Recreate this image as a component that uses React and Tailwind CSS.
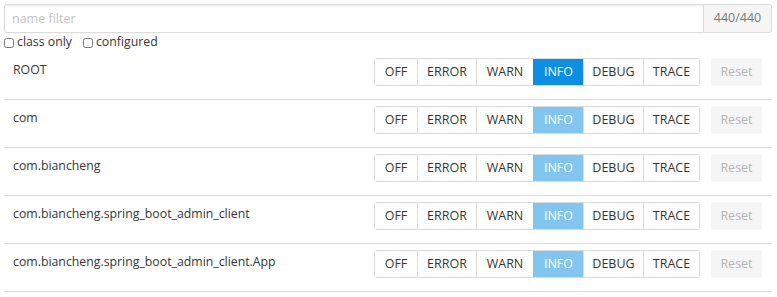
import React from 'react';

const levels = [
  { name: 'OFF', w: 'w-[42px]' },
  { name: 'ERROR', w: 'w-[59px]' },
  { name: 'WARN', w: 'w-[57px]' },
  { name: 'INFO', w: 'w-[50px]' },
  { name: 'DEBUG', w: 'w-[60px]' },
  { name: 'TRACE', w: 'w-[56px]' },
];

const loggers = [
  { name: 'ROOT', level: 'INFO', configured: true },
  { name: 'com', level: 'INFO' },
  { name: 'com.biancheng', level: 'INFO' },
  { name: 'com.biancheng.spring_boot_admin_client', level: 'INFO' },
  { name: 'com.biancheng.spring_boot_admin_client.App', level: 'INFO' },
];

const LevelButtons = ({ level, configured }) => (
  <div className="flex h-[28px] rounded-[3px] border border-[#dbdbdb]">
    {levels.map((l, i) => {
      const active = l.name === level;
      let cls = 'bg-white text-[#363636]';
      if (active) cls = configured ? 'bg-[#0b8ee3] text-white' : 'bg-[#82c5f1] text-white';
      return (
        <button
          key={l.name}
          className={`${l.w} ${cls} ${i > 0 ? 'border-l border-[#dbdbdb]' : ''} ${active ? 'border-l-transparent' : ''} flex items-center justify-center text-[12.5px] leading-none`}
        >
          {l.name}
        </button>
      );
    })}
  </div>
);

export default function App() {
  return (
    <div className="w-[777px] h-[297px] bg-white pl-[4px] pr-[5px] pt-[4px] text-[#363636]" style={{ fontFamily: '"Segoe UI", "Open Sans", sans-serif' }}>
      <div className="flex h-[29px]">
        <input
          placeholder="name filter"
          className="flex-1 h-full border border-[#dbdbdb] rounded-l-[3px] px-[7px] text-[12.5px] placeholder:text-[#c4c4c4] outline-none shadow-[inset_0_1px_2px_rgba(10,10,10,0.08)]"
        />
        <div className="w-[68px] h-full flex items-center justify-center bg-[#f5f5f5] border border-l-0 border-[#dbdbdb] rounded-r-[3px] text-[12.5px] text-[#7a7a7a]">
          440/440
        </div>
      </div>

      <div className="flex items-center h-[19px] text-[12.3px] text-[#363636]">
        <label className="flex items-center">
          <input type="checkbox" className="w-[10px] h-[10px] mr-[3px] accent-gray-400" />
          class only
        </label>
        <label className="flex items-center ml-[11px]">
          <input type="checkbox" className="w-[10px] h-[10px] mr-[3px] accent-gray-400" />
          configured
        </label>
      </div>

      {loggers.map((lg) => (
        <div key={lg.name} className="flex items-start h-[48px] border-b border-[#dbdbdb] pt-[6px] pl-[9px] pr-[10px]">
          <div className="flex-1 text-[12.3px] leading-[20px] pt-[2px] text-[#363636]">{lg.name}</div>
          <LevelButtons level={lg.level} configured={lg.configured} />
          <button className="ml-[11px] w-[51px] h-[28px] rounded-[3px] bg-[#f5f5f5] text-[#b5b5b5] text-[12.5px]">
            Reset
          </button>
        </div>
      ))}
    </div>
  );
}
